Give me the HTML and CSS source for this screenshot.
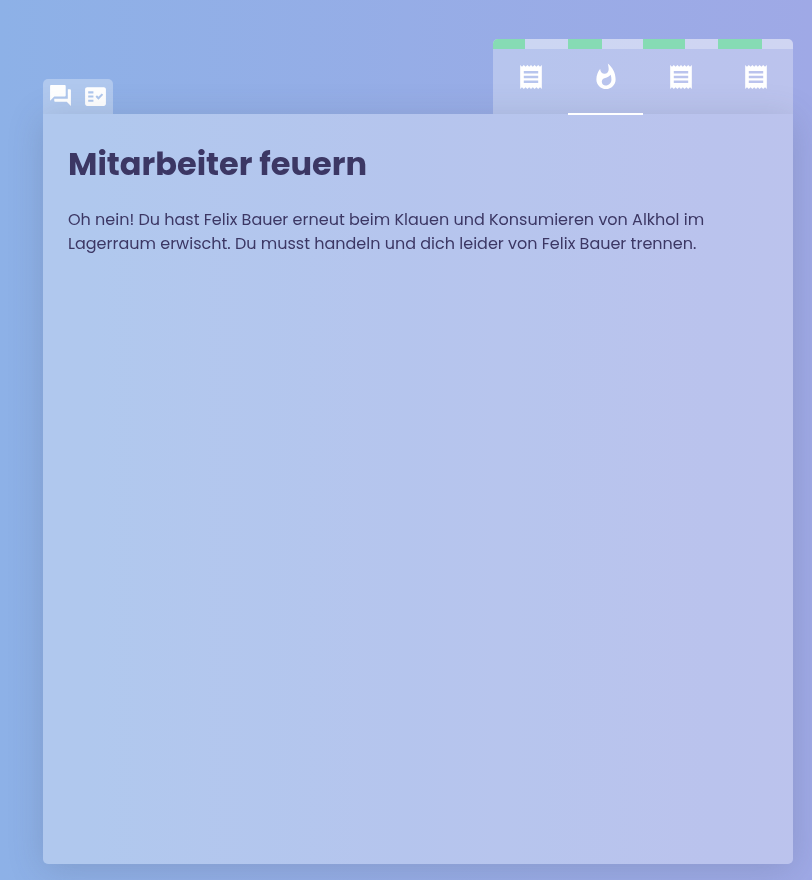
FILE: index.html
```html
<!DOCTYPE html>
<html lang="de">
<head>
<meta charset="utf-8">
<title>Mitarbeiter feuern</title>
<link rel="stylesheet" href="styles.css">
</head>
<body>
<svg width="0" height="0" class="defs">
<symbol id="receipt" viewBox="0 0 24 24"><path d="M18 17H6v-2h12v2zm0-4H6v-2h12v2zm0-4H6V7h12v2zM3 22l1.5-1.5L6 22l1.5-1.5L9 22l1.5-1.5L12 22l1.5-1.5L15 22l1.5-1.5L18 22l1.5-1.5L21 22V2l-1.5 1.5L18 2l-1.5 1.5L15 2l-1.5 1.5L12 2l-1.5 1.5L9 2 7.5 3.5 6 2 4.5 3.5 3 2v20z"/></symbol>
</svg>
<main class="window">
<div class="bar">
<nav class="modes">
<a class="mode"><svg class="icon-small" viewBox="0 0 24 24"><path d="M21 6h-2v9H6v2c0 .55.45 1 1 1h11l4 4V7c0-.55-.45-1-1-1zm-4 6V3c0-.55-.45-1-1-1H3c-.55 0-1 .45-1 1v14l4-4h10c.55 0 1-.45 1-1z"/></svg></a>
<a class="mode"><svg class="icon-small icon-check" viewBox="0 0 24 24"><path d="M20 3H4c-1.1 0-2 .9-2 2v14c0 1.1.9 2 2 2h16c1.1 0 2-.9 2-2V5c0-1.1-.9-2-2-2zM10 17H5v-2h5v2zm0-4H5v-2h5v2zm0-4H5V7h5v2zm4.82 6L12 12.16l1.41-1.41 1.41 1.42L17.99 9l1.42 1.42L14.82 15z"/></svg></a>
</nav>
<nav class="tasks">
<a class="task"><div class="progress"><div class="fill" style="width:32px"></div></div><svg class="icon" viewBox="0 0 24 24"><use href="#receipt"/></svg></a>
<a class="task active"><div class="progress"><div class="fill" style="width:34px"></div></div><svg class="icon" viewBox="0 0 24 24"><path d="M13.5.67s.74 2.65.74 4.8c0 2.06-1.35 3.73-3.41 3.73-2.07 0-3.63-1.67-3.63-3.73l.03-.36C5.21 7.51 4 10.62 4 14c0 4.42 3.58 8 8 8s8-3.58 8-8C20 8.61 17.41 3.8 13.5.67zM11.71 19c-1.78 0-3.22-1.4-3.22-3.14 0-1.62 1.05-2.76 2.81-3.12 1.77-.36 3.6-1.21 4.62-2.58.39 1.29.59 2.65.59 4.04 0 2.65-2.15 4.8-4.8 4.8z"/></svg></a>
<a class="task"><div class="progress"><div class="fill" style="width:42px"></div></div><svg class="icon" viewBox="0 0 24 24"><use href="#receipt"/></svg></a>
<a class="task"><div class="progress"><div class="fill" style="width:44px"></div></div><svg class="icon" viewBox="0 0 24 24"><use href="#receipt"/></svg></a>
</nav>
</div>
<section class="panel">
<h1>Mitarbeiter feuern</h1>
<p>Oh nein! Du hast Felix Bauer erneut beim Klauen und Konsumieren von Alkhol im Lagerraum erwischt. Du musst handeln und dich leider von Felix Bauer trennen.</p>
</section>
</main>
</body>
</html>
```
FILE: styles.css
```css
* { box-sizing: border-box; }
html, body { height: 100%; }
body {
  margin: 0;
  overflow: hidden;
  background: linear-gradient(90deg, #8db1e7, #9fa9e6);
  color: #3c3764;
  font-family: Poppins, Inter, sans-serif;
}
.defs { position: absolute; }
.window { width: 750px; margin-left: 43px; padding-top: 39px; }
.bar { display: flex; justify-content: space-between; align-items: flex-end; height: 75px; }
.modes, .tasks { display: flex; background: rgba(255, 255, 255, .3); border-radius: 5px 5px 0 0; }
.mode { display: flex; justify-content: center; width: 35px; height: 35px; padding-top: 4px; }
.icon-small { width: 25px; height: 25px; fill: #fff; }
.icon-check { margin-top: 1.4px; }
.task { position: relative; display: flex; flex-direction: column; align-items: center; width: 75px; height: 75px; }
.progress { width: 100%; height: 10px; background: rgba(255, 255, 255, .3); overflow: hidden; }
.task:first-child .progress { border-top-left-radius: 5px; }
.task:last-child .progress { border-top-right-radius: 5px; }
.fill { height: 100%; background: #86dbb4; }
.icon { width: 28px; height: 28px; margin: 14px 0 0 1px; fill: #fff; transform: scale(1.03); }
.active::after { content: ""; position: absolute; z-index: 2; left: 0; right: 0; bottom: -1px; height: 2px; background: #fff; }
.panel {
  position: relative;
  height: 750px;
  padding: 25px;
  background: rgba(255, 255, 255, .3);
  border-radius: 0 0 5px 5px;
  box-shadow: 0 5px 35px rgba(70, 80, 100, .21);
  -webkit-backdrop-filter: blur(0);
  backdrop-filter: blur(0);
}
h1 { margin: 0; font-size: 32px; line-height: 50px; font-weight: 700; }
p { margin: 19px 0 0; font-size: 16px; line-height: 24px; }
```
